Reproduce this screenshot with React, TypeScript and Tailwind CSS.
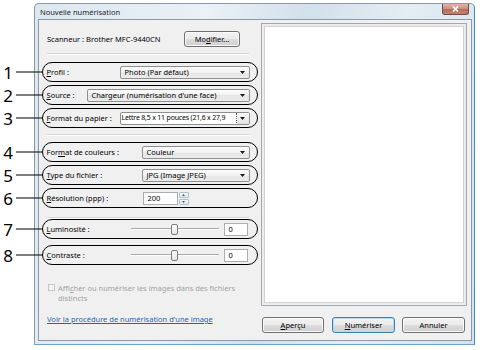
import type { ReactNode } from 'react';

const Arrow = () => (
  <svg width="5" height="3" viewBox="0 0 5 3" className="shrink-0">
    <path d="M0 0h5L2.5 3z" fill="#1a1a1a" />
  </svg>
);

function Callout({ n }: { n: number }) {
  return (
    <div className="absolute right-full top-1/2 -translate-y-1/2 flex items-center w-[40px]">
      <span className="w-[10px] text-center text-[17px] leading-none text-black font-['Noto_Sans',sans-serif]">{n}</span>
      <span className="flex-1 h-px bg-black ml-[3px]" />
    </div>
  );
}

function Oval({ n, children, className }: { n: number; children: ReactNode; className: string }) {
  return (
    <div
      className={`relative -ml-[5px] w-[216px] h-[20px] shrink-0 border-[1.5px] border-black rounded-full flex items-center pl-[3.5px] pr-[7.5px] ${className}`}
    >
      <Callout n={n} />
      {children}
    </div>
  );
}

function Combo({ value, w }: { value: string; w: string }) {
  return (
    <div
      className={`${w} ml-auto h-[13px] flex items-center border border-[#8e8f8f] rounded-[2px] bg-[linear-gradient(#fcfcfc,#f1f1f1_50%,#e6e6e6_50%,#ececec)] pl-[4px] pr-[4px]`}
    >
      <span className="flex-1 whitespace-nowrap">{value}</span>
      <Arrow />
    </div>
  );
}

function Slider({ n, label }: { n: number; label: ReactNode }) {
  return (
    <Oval n={n} className="">
      <span className="w-[84px] shrink-0">{label}</span>
      <div className="relative w-[88px] h-[12px] flex items-center justify-center">
        <div className="absolute left-0 right-0 top-[5px] h-[2px] border-t border-[#a9a9a9] bg-white" />
        <div className="relative w-[7px] h-[11px] rounded-[2px] border border-[#7d7d7d] bg-[linear-gradient(#ffffff,#e4e4e4)]" />
      </div>
      <div className="ml-[5px] w-[24px] h-[13px] border border-[#abadb3] bg-white pl-[4px] flex items-center">0</div>
    </Oval>
  );
}

function Btn({ children, w, def }: { children: ReactNode; w: string; def?: boolean }) {
  return (
    <div
      className={`${w} h-[16px] flex items-center justify-center rounded-[3px] border ${
        def ? 'border-[#3c7fb1] shadow-[inset_0_0_0_1px_#b5dcf5]' : 'border-[#707070] shadow-[inset_0_0_0_1px_#fbfbfb]'
      } bg-[linear-gradient(#f2f2f2,#ebebeb_50%,#dddddd_50%,#cfcfcf)]`}
    >
      {children}
    </div>
  );
}

export default function App() {
  return (
    <div className="w-[500px] h-[350px] bg-white pl-[34px] pt-[3px] text-[7.5px] leading-[10px] text-black font-['Noto_Sans',sans-serif]">
      {/* window */}
      <div className="w-[441px] h-[342px] flex flex-col rounded-t-[5px] border border-t-[#8c9aa6] border-l-[#8c9aa6] border-r-[#3b8ccc] border-b-[#6fa3cc] bg-[linear-gradient(100deg,#dce7f0,#eaf1f7_35%,#d2e0eb_55%,#e4edf4_75%,#d5e2ec)] pl-[3px] pr-[2px] pb-[3px]">
        {/* title bar */}
        <div className="h-[15px] flex items-start shrink-0">
          <span className="pl-[2px] pt-[4px] leading-[9px] text-[#1c1c1c]">Nouvelle numérisation</span>
          <div className="ml-auto mr-[3px] w-[27px] h-[11px] rounded-b-[3px] border border-t-0 border-[#6e4a44] bg-[linear-gradient(#e3b7ac,#c98d7f_50%,#b46a59_50%,#c08474)] flex items-center justify-center">
            <svg width="7" height="6" viewBox="0 0 7 6">
              <path d="M1 0.5l5 5M6 0.5l-5 5" stroke="#fff" strokeWidth="1.6" />
            </svg>
          </div>
        </div>

        {/* client */}
        <div className="flex-1 flex border border-[#8b9aa8] bg-[#f0f0f0]">
          {/* left column */}
          <div className="w-[219px] shrink-0 pl-[8px] pr-[9px] pt-[11px] flex flex-col">
            <div className="flex items-center justify-between h-[15px]">
              <span>Scanneur : Brother MFC-9440CN</span>
              <div className="mr-[9px]">
                <Btn w="w-[56px]">
                  Mo<u>d</u>ifier...
                </Btn>
              </div>
            </div>
            <div className="mt-[7px] h-[2px] border-t border-[#d5d5d5] border-b border-b-white" />

            <Oval n={1} className="mt-[7px]">
              <span>
                <u>P</u>rofil :
              </span>
              <Combo value="Photo (Par défaut)" w="w-[130px]" />
            </Oval>
            <Oval n={2} className="mt-[3px]">
              <span>
                <u>S</u>ource :
              </span>
              <Combo value="Chargeur (numérisation d'une face)" w="w-[163px]" />
            </Oval>
            <Oval n={3} className="mt-[3px]">
              <span>
                <u>F</u>ormat du papier :
              </span>
              <div className="ml-auto w-[130px] h-[13px] flex items-center border border-[#8e8f8f] rounded-[2px] bg-white">
                <span className="flex-1 whitespace-nowrap pl-[1px] text-[7px] tracking-[-0.2px] border-r border-dotted border-[#555]">
                  Lettre 8,5 x 11 pouces (21,6 x 27,9
                </span>
                <div className="w-[12px] h-full flex items-center justify-center bg-[linear-gradient(#fafafa,#e3e3e3)]">
                  <Arrow />
                </div>
              </div>
            </Oval>

            <div className="mt-[6px] h-[2px] border-t border-[#d5d5d5] border-b border-b-white" />

            <Oval n={4} className="mt-[6px]">
              <span>
                For<u>m</u>at de couleurs :
              </span>
              <Combo value="Couleur" w="w-[108px]" />
            </Oval>
            <Oval n={5} className="mt-[3px]">
              <span>
                <u>T</u>ype du fichier :
              </span>
              <Combo value="JPG (Image JPEG)" w="w-[108px]" />
            </Oval>
            <Oval n={6} className="mt-[3px]">
              <span className="w-[96px] shrink-0">
                <u>R</u>ésolution (ppp) :
              </span>
              <div className="w-[35px] h-[13px] border border-[#abadb3] bg-white pl-[4px] flex items-center">200</div>
              <div className="w-[10px] h-[13px] flex flex-col gap-px ml-px">
                <div className="flex-1 border border-[#b4c2cf] rounded-[1px] bg-[linear-gradient(#f4f8fb,#dfe8f0)] flex items-center justify-center">
                  <svg width="3" height="2" viewBox="0 0 3 2"><path d="M0 2h3L1.5 0z" fill="#555" /></svg>
                </div>
                <div className="flex-1 border border-[#b4c2cf] rounded-[1px] bg-[linear-gradient(#f4f8fb,#dfe8f0)] flex items-center justify-center">
                  <svg width="3" height="2" viewBox="0 0 3 2"><path d="M0 0h3L1.5 2z" fill="#555" /></svg>
                </div>
              </div>
            </Oval>

            <div className="mt-[9px] h-[2px] border-t border-[#d5d5d5] border-b border-b-white" />

            <Slider
              n={7}
              label={
                <>
                  <u>L</u>uminosité :
                </>
              }
            />
            <div className="mt-[6px]" />
            <Slider
              n={8}
              label={
                <>
                  <u>C</u>ontraste :
                </>
              }
            />

            <div className="mt-[18px] flex items-start text-[#a0a0a0]">
              <div className="mt-[1px] ml-[1px] w-[7px] h-[7px] border border-[#c5c5c5] bg-[#f4f4f4] shrink-0" />
              <span className="ml-[3px]">
                Affi<u>c</u>her ou numériser les images dans des fichiers
                <br />
                distincts
              </span>
            </div>
            <span className="mt-[11px] text-[#1d66b5] underline">Voir la procédure de numérisation d'une image</span>
          </div>

          {/* right column */}
          <div className="ml-[3px] pt-[3px] flex flex-col">
            <div className="w-[206px] h-[283px] border border-[#a2a9b0] bg-[#ececec] p-[2px]">
              <div className="w-full h-full bg-white border border-[#d2d2d2]" />
            </div>
            <div className="mt-[11px] flex">
              <div className="ml-[1px]">
                <Btn w="w-[62px]">
                  <u>A</u>perçu
                </Btn>
              </div>
              <div className="ml-[8px]">
                <Btn w="w-[63px]" def>
                  <u>N</u>umériser
                </Btn>
              </div>
              <div className="ml-[7px]">
                <Btn w="w-[63px]">Annuler</Btn>
              </div>
            </div>
          </div>
        </div>
      </div>
    </div>
  );
}
